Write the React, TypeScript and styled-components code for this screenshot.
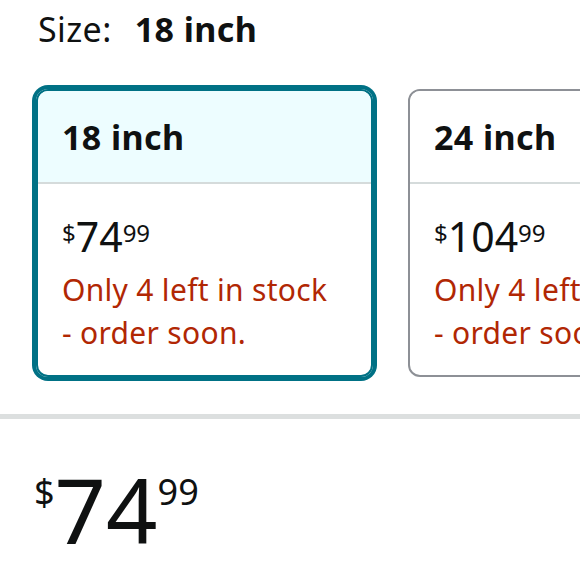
import styled, { createGlobalStyle } from 'styled-components';

const stockLines = ['Only 4 left in stock', '- order soon.'];

const sizes = [
  { id: '18', label: '18 inch', whole: '74', fraction: '99', stock: stockLines },
  { id: '24', label: '24 inch', whole: '104', fraction: '99', stock: stockLines },
];

const selectedId = '18';

export default function App() {
  const selected = sizes.find((s) => s.id === selectedId)!;

  return (
    <>
      <GlobalStyle />
      <Page>
        <SizeHeading>
          <span>Size:</span>
          <strong>{selected.label}</strong>
        </SizeHeading>
        <CardRow>
          {sizes.map((size) => (
            <SizeCard key={size.id} $selected={size.id === selectedId}>
              <CardHeader $selected={size.id === selectedId}>{size.label}</CardHeader>
              <CardBody>
                <SmallPrice>
                  <sup>$</sup>
                  {size.whole}
                  <sup>{size.fraction}</sup>
                </SmallPrice>
                <Stock>
                  {size.stock.map((line) => (
                    <StockLine key={line}>{line}</StockLine>
                  ))}
                </Stock>
              </CardBody>
            </SizeCard>
          ))}
        </CardRow>
        <Divider />
        <BigPrice>
          <sup>$</sup>
          {selected.whole}
          <sup>{selected.fraction}</sup>
        </BigPrice>
      </Page>
    </>
  );
}

const GlobalStyle = createGlobalStyle`
  body {
    margin: 0;
    background: #fff;
    font-family: "Noto Sans", "Open Sans", sans-serif;
    color: #0f1111;
  }
`;

const Page = styled.div`
  width: 580px;
  height: 580px;
  overflow: hidden;
`;

const SizeHeading = styled.div`
  display: flex;
  gap: 23px;
  padding: 5px 0 0 38px;
  font-size: 34px;
  line-height: 48px;
  letter-spacing: 0.4px;

  strong {
    font-weight: 700;
  }
`;

const CardRow = styled.div`
  display: flex;
  gap: 35px;
  padding: 36px 0 0 36px;
`;

const SizeCard = styled.div<{ $selected: boolean }>`
  flex: 0 0 337px;
  height: 288px;
  box-sizing: border-box;
  border: 2px solid ${(p) => (p.$selected ? '#007185' : '#8d9096')};
  border-radius: 12px;
  box-shadow: ${(p) => (p.$selected ? '0 0 0 4px #007185' : 'none')};
  overflow: hidden;
  display: flex;
  flex-direction: column;
`;

const CardHeader = styled.div<{ $selected: boolean }>`
  height: 93px;
  box-sizing: border-box;
  padding: 0 0 0 24px;
  display: flex;
  align-items: center;
  background: ${(p) => (p.$selected ? '#edfdff' : '#fff')};
  border-bottom: 2px solid #d5dbdb;
  font-size: 34px;
  font-weight: 700;
  letter-spacing: 0.4px;
`;

const CardBody = styled.div`
  padding: 28px 12px 0 24px;
`;

const SmallPrice = styled.div`
  font-size: 41px;
  line-height: 48px;

  sup {
    font-size: 24px;
    vertical-align: top;
    position: relative;
    top: -3px;
  }
`;

const Stock = styled.div`
  color: #b12704;
  font-size: 30px;
  line-height: 43px;
  letter-spacing: 0.3px;
  margin-top: 8px;
`;

const StockLine = styled.div`
  white-space: nowrap;
`;

const Divider = styled.div`
  height: 5px;
  background: #dcdfdf;
  margin-top: 37px;
`;

const BigPrice = styled.div`
  padding: 40px 0 0 34px;
  font-size: 90px;
  line-height: 100px;

  sup {
    font-size: 36px;
    vertical-align: top;
    position: relative;
    top: -17px;
  }
`;
